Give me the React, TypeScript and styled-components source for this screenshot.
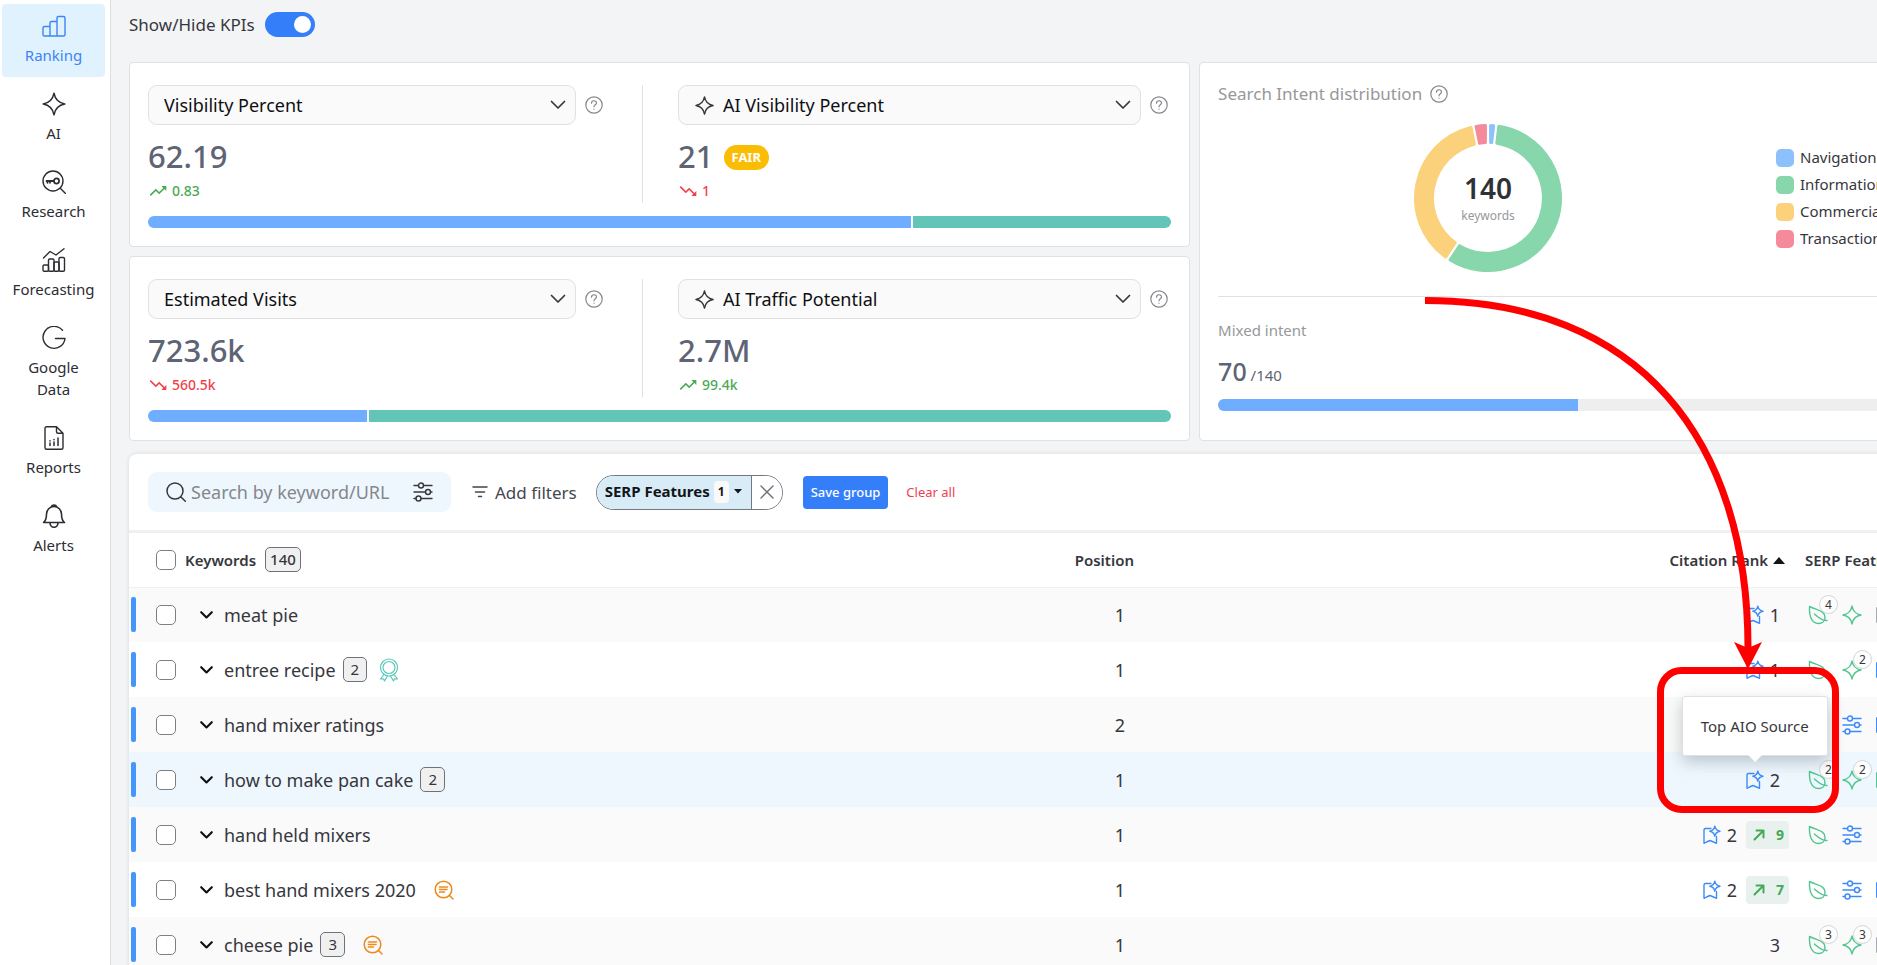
import React from "react";
import styled, { createGlobalStyle, css } from "styled-components";

const GlobalStyle = createGlobalStyle`
  *, *::before, *::after { box-sizing: border-box; }
  body {
    margin: 0;
    background: #f3f4f6;
    color: #36373d;
    font-family: "Noto Sans", "Open Sans", sans-serif;
    font-size: 18px;
  }
  button, input, select { font: inherit; color: inherit; }
`;

/* ---------- layout ---------- */

const Shell = styled.div`
  display: flex;
  height: 100vh;
  overflow: hidden;
`;

const Sidebar = styled.nav`
  flex: none;
  width: 111px;
  padding: 4px 5px 0 2px;
  display: flex;
  flex-direction: column;
  gap: 5px;
  background: #fff;
  border-right: 1px solid #dcdee0;
`;

const NavItem = styled.a<{ $active?: boolean }>`
  display: flex;
  flex-direction: column;
  align-items: center;
  padding: 10px 8px 11px;
  border-radius: 4px;
  font-size: 15px;
  line-height: 22px;
  text-align: center;
  text-decoration: none;
  color: ${(p) => (p.$active ? "#3d84f7" : "#2c2d33")};
  background: ${(p) => (p.$active ? "#e1f2ff" : "transparent")};
  svg { margin-bottom: 6px; }
`;

const Main = styled.main`
  flex: 1;
  min-width: 0;
  overflow: hidden;
  padding-left: 18px;
`;

const Workspace = styled.div`
  position: relative;
  min-width: 1828px;
`;

const KpiToggle = styled.label`
  display: flex;
  align-items: center;
  gap: 10px;
  width: max-content;
  padding: 12px 0 25px;
  font-size: 17px;
  line-height: 25px;
`;

const Switch = styled.input`
  appearance: none;
  margin: 0;
  width: 50px;
  height: 25px;
  padding: 4px;
  border-radius: 13px;
  background: #347efa;
  display: flex;
  justify-content: flex-start;
  &:checked { justify-content: flex-end; }
  &::before {
    content: "";
    width: 17px;
    height: 17px;
    border-radius: 50%;
    background: #fff;
  }
`;

const Dashboard = styled.section`
  display: grid;
  grid-template-columns: 7fr 5fr;
  gap: 9px;
`;

const KpiColumn = styled.div`
  display: flex;
  flex-direction: column;
  gap: 9px;
`;

const Panel = styled.article`
  background: #fff;
  border: 1px solid #dfe1e3;
  border-radius: 4px;
  padding: 22px 18px 18px;
`;

/* ---------- KPI panels ---------- */

const KpiPair = styled.div`
  display: grid;
  grid-template-columns: 15fr 16fr;
`;

const Kpi = styled.div<{ $second?: boolean }>`
  height: 118px;
  ${(p) =>
    p.$second
      ? css`padding: 0 3px 0 35px;`
      : css`padding-right: 39px; border-right: 1px solid #dfe1e3;`}
`;

const SelectRow = styled.div`
  display: flex;
  align-items: center;
  gap: 9px;
`;

const SelectBox = styled.div`
  flex: 1;
  display: grid;
  align-items: center;
  > * { grid-area: 1 / 1; }
  > svg { pointer-events: none; }
  > svg:first-of-type { justify-self: end; margin-right: 10px; }
  > svg + svg { margin-left: 17px; }
`;

const MetricSelect = styled.select<{ $icon?: boolean }>`
  appearance: none;
  width: 100%;
  height: 40px;
  padding: 0 36px 0 ${(p) => (p.$icon ? 44 : 15)}px;
  border: 1px solid #dfe1e3;
  border-radius: 9px;
  background: #fafafa;
  color: #0e0f12;
  font-size: 18px;
`;

const HelpButton = styled.button`
  display: flex;
  padding: 0;
  border: 0;
  background: none;
  color: #86888c;
`;

const Value = styled.div`
  display: flex;
  align-items: center;
  gap: 10px;
  margin-top: 11px;
  font-size: 31px;
  line-height: 41px;
  font-weight: 500;
  color: #5e6475;
`;

const Grade = styled.span`
  margin-top: 2px;
  padding: 0 8px;
  border-radius: 13px;
  background: #fbbc04;
  color: #fff;
  font-size: 13px;
  line-height: 25px;
  font-weight: 700;
`;

const Delta = styled.div<{ $down?: boolean }>`
  display: flex;
  align-items: center;
  gap: 4px;
  margin-top: 4px;
  font-size: 14px;
  line-height: 20px;
  font-weight: 500;
  color: ${(p) => (p.$down ? "#ef424c" : "#4aab54")};
`;

const Bar = styled.div<{ $track?: boolean }>`
  display: flex;
  gap: 2px;
  height: 12px;
  margin-top: ${(p) => (p.$track ? 6 : 13)}px;
  border-radius: 6px;
  overflow: hidden;
  background: ${(p) => (p.$track ? "#eeeeee" : "transparent")};
`;

const Segment = styled.span<{ $color: string }>`
  background: ${(p) => p.$color};
`;

/* ---------- intent panel ---------- */

const IntentTitle = styled.h2`
  display: flex;
  align-items: center;
  gap: 8px;
  margin: 0;
  font-size: 17px;
  line-height: 18px;
  font-weight: 400;
  color: #96989a;
`;

const IntentBody = styled.div`
  display: flex;
  align-items: center;
  padding: 20px 0 23px;
  border-bottom: 1px solid #dfe1e3;
`;

const DonutArea = styled.div`
  width: 75%;
  display: flex;
  justify-content: center;
`;

const Donut = styled.div`
  display: grid;
  place-items: center;
  > * { grid-area: 1 / 1; }
`;

const DonutLabel = styled.div`
  display: flex;
  flex-direction: column;
  align-items: center;
  padding-bottom: 2px;
  font-size: 12px;
  line-height: 18px;
  color: #96989a;
  strong {
    font-size: 28px;
    line-height: 38px;
    font-weight: 600;
    color: #303136;
  }
`;

const Legend = styled.ul`
  margin: 0;
  padding: 0 0 0 18px;
  list-style: none;
  font-size: 15px;
  line-height: 27px;
`;

const LegendItem = styled.li<{ $color: string }>`
  display: flex;
  align-items: center;
  gap: 6px;
  white-space: nowrap;
  &::before {
    content: "";
    width: 18px;
    height: 18px;
    border-radius: 5px;
    background: ${(p) => p.$color};
  }
`;

const MixedTitle = styled.h3`
  margin: 22px 0 0;
  font-size: 15px;
  line-height: 22px;
  font-weight: 400;
  color: #96989a;
`;

const MixedValue = styled.div`
  margin-top: 12px;
  font-size: 15px;
  line-height: 36px;
  color: #5e6475;
  strong { font-size: 25px; font-weight: 500; }
`;

/* ---------- keyword card ---------- */

const Card = styled.section`
  margin-top: 13px;
  background: #fff;
  border-radius: 8px 8px 0 0;
  box-shadow: 0 0 4px rgba(60, 80, 80, 0.16);
`;

const Toolbar = styled.div`
  display: flex;
  align-items: center;
  height: 79px;
  padding: 0 19px;
  border-bottom: 3px solid #eff0f0;
`;

const SearchBox = styled.label`
  display: flex;
  align-items: center;
  width: 303px;
  height: 40px;
  padding: 0 18px;
  border-radius: 9px;
  background: #eff7fe;
`;

const SearchInput = styled.input`
  flex: 1;
  min-width: 0;
  margin: 0 8px 0 5px;
  padding: 0;
  border: 0;
  background: none;
  outline: 0;
  &::placeholder { color: #85878c; opacity: 1; }
`;

const AddFilters = styled.button`
  display: flex;
  align-items: center;
  gap: 7px;
  margin-left: 21px;
  padding: 0;
  border: 0;
  background: none;
  color: #44464e;
  font-size: 17px;
`;

const FilterPill = styled.div`
  display: flex;
  height: 35px;
  margin-left: 19px;
  border: 1px solid #747780;
  border-radius: 18px;
  overflow: hidden;
`;

const PillMain = styled.button`
  display: flex;
  align-items: center;
  gap: 4px;
  padding: 0 8px 2px;
  border: 0;
  border-right: 1px solid #747780;
  background: #d7ecf6;
  color: #14151a;
  font-size: 15px;
  font-weight: 700;
  span {
    margin-top: 2px;
    padding: 0 4px;
    border-radius: 4px;
    background: #fafafa;
    font-size: 12px;
    line-height: 22px;
  }
`;

const PillClose = styled.button`
  display: flex;
  align-items: center;
  padding: 0 8px;
  border: 0;
  background: #fff;
  color: #6e7078;
`;

const SaveButton = styled.button`
  height: 33px;
  margin-left: 20px;
  padding: 0 8px;
  border: 0;
  border-radius: 4px;
  background: #347efa;
  color: #fff;
  font-size: 13px;
  font-weight: 500;
`;

const ClearLink = styled.a`
  margin-left: 18px;
  font-size: 13px;
  color: #ee3e50;
  text-decoration: none;
`;

const Table = styled.table`
  width: 100%;
  table-layout: fixed;
  border-collapse: collapse;
`;

const HeadCell = styled.th<{ $right?: boolean }>`
  height: 54px;
  padding: 0 9px 0 ${(p) => (p.$right ? 0 : 8)}px;
  border-bottom: 1px solid #eff0f0;
  font-size: 15px;
  font-weight: 600;
  text-align: ${(p) => (p.$right ? "right" : "left")};
  white-space: nowrap;
  svg { margin: 0 3px 2px 1px; }
`;

const HeadKeywords = styled.div`
  display: flex;
  align-items: center;
  gap: 9px;
  padding-left: 19px;
`;

const Row = styled.tr<{ $hover?: boolean }>`
  height: 55px;
  background: #fff;
  &:nth-child(odd) { background: #fafafa; }
  ${(p) => p.$hover && css`&& { background: #eff7fe; }`}
`;

const Cell = styled.td<{ $right?: boolean }>`
  padding: 0 ${(p) => (p.$right ? 18 : 0)}px 0 0;
  text-align: ${(p) => (p.$right ? "right" : "left")};
`;

const Keyword = styled.div`
  display: flex;
  align-items: center;
  &::before {
    content: "";
    width: 5px;
    height: 35px;
    margin: 0 20px 0 2px;
    border-radius: 2px;
    background: #4596fb;
  }
`;

const Check = styled.input`
  appearance: none;
  flex: none;
  width: 20px;
  height: 20px;
  margin: 0;
  border: 1px solid #7d7f85;
  border-radius: 5px;
  background: #fff;
`;

const Expand = styled.button`
  display: flex;
  margin: 0 11px 0 24px;
  padding: 0;
  border: 0;
  background: none;
  color: #0e0f12;
`;

const Count = styled.span<{ $tight?: boolean }>`
  margin-left: ${(p) => (p.$tight ? 0 : 7)}px;
  padding: 0 ${(p) => (p.$tight ? 4 : 7)}px;
  border: 1px solid #70727b;
  border-radius: 5px;
  background: #f0f0f0;
  font-size: 15px;
  line-height: 23px;
  font-weight: ${(p) => (p.$tight ? 500 : 400)};
`;

const KeywordBadge = styled.span<{ $award: boolean }>`
  display: flex;
  margin-left: ${(p) => (p.$award ? 12 : 18)}px;
  color: ${(p) => (p.$award ? "#5bc8bd" : "#ee8a1d")};
`;

const Citation = styled.div`
  display: flex;
  align-items: center;
  justify-content: flex-end;
  gap: 6px;
  padding-right: 8px;
  line-height: 24px;
  > b { font-weight: 400; margin-right: 9px; }
  > b + span { margin-left: -6px; }
`;

const CitationIcon = styled.span`
  position: relative;
  display: flex;
  color: #3c8bfb;
`;

const Gain = styled.span`
  display: flex;
  align-items: center;
  justify-content: space-between;
  width: 43px;
  height: 28px;
  padding: 0 5px 0 7px;
  border-radius: 4px;
  background: #e8f1ee;
  color: #43ab55;
  font-size: 14px;
  font-weight: 700;
`;

const Tooltip = styled.div`
  position: absolute;
  z-index: 2;
  left: 50%;
  bottom: 34px;
  transform: translateX(-50%);
  padding: 0 18px;
  border: 1px solid #dfe1e3;
  border-radius: 3px;
  background: #fff;
  box-shadow: 0 6px 16px rgba(50, 70, 80, 0.28);
  color: #36373d;
  font-size: 15px;
  line-height: 58px;
  white-space: nowrap;
  &::after {
    content: "";
    position: absolute;
    top: 100%;
    left: 50%;
    margin-left: -7px;
    border: 7px solid transparent;
    border-top-color: #fff;
    border-bottom: 0;
  }
`;

const Features = styled.div`
  display: flex;
  gap: 14px;
  padding-left: 11px;
`;

const Feature = styled.span<{ $color: string }>`
  position: relative;
  display: flex;
  color: ${(p) => p.$color};
`;

const FeatureCount = styled.sup`
  position: absolute;
  top: -10px;
  left: 11px;
  width: 19px;
  height: 19px;
  border: 1px solid #d3d6d8;
  border-radius: 50%;
  background: #fdfdfd;
  color: #36373d;
  font-size: 12px;
  line-height: 17px;
  text-align: center;
`;

const Callout = styled.svg`
  position: absolute;
  z-index: 3;
  top: 290px;
  left: 1290px;
  pointer-events: none;
`;

/* ---------- icons ---------- */

type IconProps = { w?: number; h?: number; box?: string; sw?: number; children: React.ReactNode };

const Icon = ({ w = 24, h = w, box = `0 0 ${w} ${h}`, sw = 1.4, children }: IconProps) => (
  <svg width={w} height={h} viewBox={box} fill="none" stroke="currentColor" strokeWidth={sw}
    strokeLinecap="round" strokeLinejoin="round" aria-hidden="true">{children}</svg>
);

const sparkPath = "M12 1.2C13 6.800 17.200 11 22.800 12C17.200 13 13 17.200 12 22.800C11 17.200 6.800 13 1.200 12C6.800 11 11 6.800 12 1.200Z";

const RankingIcon = () => (
  <Icon><path d="M8 12.500H2.500A1.500 1.500 0 0 0 1 14V20.500A1.500 1.500 0 0 0 2.500 22H8M15 7.500H9.500A1.500 1.500 0 0 0 8 9V22H15M15 22V4a1.500 1.500 0 0 1 1.500-1.500h5A1.500 1.500 0 0 1 23 4V20.500a1.500 1.500 0 0 1-1.500 1.500Z" /></Icon>
);
const SparkIcon = ({ size = 24, sw = 1.5 }: { size?: number; sw?: number }) => (
  <Icon w={size} box="0 0 24 24" sw={sw}><path d={sparkPath} /></Icon>
);
const ResearchIcon = () => (
  <Icon>
    <circle cx="11" cy="11" r="10" /><path d="M18.500 18.500L23.500 23.500" />
    <circle cx="14.500" cy="11" r="2.600" strokeWidth="1.700" />
    <path d="M11.800 11H4.500M5.500 11V12.800M8 11V12.800" strokeWidth="1.800" />
  </Icon>
);
const ForecastIcon = () => (
  <Icon>
    <path d="M1.500 10L8 3.500L14 7L22 .8" />
    <rect x="1" y="17" width="5.500" height="6.300" rx="1.200" /><rect x="6.500" y="11" width="5.500" height="12.300" rx="1.200" />
    <rect x="12" y="14" width="5" height="9.300" rx="1.200" /><rect x="17" y="9.500" width="5.500" height="13.800" rx="1.200" />
  </Icon>
);
const GoogleIcon = () => (
  <Icon><path d="M20.500 4.300A11 11 0 1 0 23 12.500H13.500" /></Icon>
);
const ReportIcon = () => (
  <Icon>
    <path d="M14.500 .8H4.500A1.500 1.500 0 0 0 3 2.300V21.700A1.500 1.500 0 0 0 4.500 23.200H19.500A1.500 1.500 0 0 0 21 21.700V7.300ZM14.500 .8V5.800A1.500 1.500 0 0 0 16 7.300H21" />
    <path d="M8 19.500V17M12 19.500V16M16 19.500V12M12 13.800V13.500M8 15V14.800" strokeWidth="1.500" />
  </Icon>
);
const BellIcon = () => (
  <Icon sw={1.6}><path d="M9.500 2.500C10 .5 14 .5 14.500 2.500M1.500 18.500C4 16.500 4.500 14 4.500 10a7.500 7.500 0 0 1 15 0C19.500 14 20 16.500 22.500 18.500ZM8 18.800a4 4.500 0 0 0 8 0" /></Icon>
);
const HelpIcon = () => (
  <Icon w={18} sw={1.2}>
    <circle cx="9" cy="9" r="8.200" />
    <path d="M6.500 7.200C6.500 4 11.500 4 11.500 7C11.500 8.800 9 8.800 9 10.800M9 13V13.200" />
  </Icon>
);
const DownIcon = ({ w = 16, sw = 1.7 }: { w?: number; sw?: number }) => (
  <Icon w={w} h={12} box="0 0 16 12" sw={sw}><path d="M1.500 2.500L8 9L14.500 2.500" /></Icon>
);
const TrendIcon = ({ down }: { down?: boolean }) => (
  <svg width="20" height="20" viewBox="0 0 24 24" fill="currentColor" aria-hidden="true">
    <path d={down
      ? "M16 18l2.290-2.290-4.880-4.880-4 4L2 7.410 3.410 6l6 6 4-4 6.300 6.290L22 12v6z"
      : "M16 6l2.290 2.290-4.880 4.880-4-4L2 16.590 3.410 18l6-6 4 4 6.300-6.290L22 12V6z"} />
  </svg>
);
const SearchIcon = () => (
  <Icon w={20} sw={1.5}><circle cx="9" cy="9" r="8" /><path d="M15 15L19.300 19.300" /></Icon>
);
const SlidersIcon = () => (
  <Icon w={20} sw={1.4}>
    <path d="M1 3.500H5.500M10.500 3.500H19M1 10H12.500M17.500 10H19M1 16.500H3M8 16.500H19" />
    <circle cx="8" cy="3.500" r="2.500" /><circle cx="15" cy="10" r="2.500" /><circle cx="5.500" cy="16.500" r="2.500" />
  </Icon>
);
const FilterIcon = () => (
  <Icon w={16} h={12} sw={1.5}><path d="M1 1H15M3.500 6H12.500M6.500 10.500H9.500" /></Icon>
);
const CloseIcon = () => (
  <Icon w={14} sw={1.4}><path d="M1 1L13 13M13 1L1 13" /></Icon>
);
const Caret = ({ up }: { up?: boolean }) => (
  <svg width={up ? 12 : 10} height={up ? 8 : 10} viewBox={up ? "0 0 12 8" : "0 0 10 10"} fill="#14151a" aria-hidden="true">
    <path d={up ? "M0 8L6 1L12 8Z" : "M1 3H9L5 7.500Z"} />
  </svg>
);
const AwardIcon = () => (
  <Icon w={20} h={24} sw={1.2}>
    <circle cx="10" cy="9.500" r="8.500" /><circle cx="10" cy="9.500" r="6" />
    <path d="M5 16.500L1.500 21L4.500 20.800L5.500 23L8.500 18M15 16.500L18.500 21L15.500 20.800L14.500 23L11.500 18" />
  </Icon>
);
const ContentIcon = () => (
  <Icon w={20} sw={1.5}>
    <circle cx="9.500" cy="9.500" r="8.300" /><path d="M15.500 15.500L19 19M5.500 7H13.500M5.500 9.500H13M5.500 12H10.500" />
  </Icon>
);
const BookmarkIcon = () => (
  <Icon w={18} h={20} sw={1.4}>
    <path d="M8 3.500H2.500A1.500 1.500 0 0 0 1 5V18.300L3.500 17L7 15.500L10.500 17L13.500 18.300V11.500" />
    <path d="M11.800 1.200C12.300 4 14 5.700 17 6.200C14 6.700 12.300 8.400 11.800 11.200C11.300 8.400 9.600 6.700 6.800 6.200C9.600 5.700 11.300 4 11.800 1.200Z" />
  </Icon>
);
const GainIcon = () => (
  <Icon w={12} sw={2}><path d="M1.500 10.500L10 2M3.500 1.500H10.500V8.500" /></Icon>
);
const LeafIcon = () => (
  <Icon w={20} sw={1.4}>
    <path d="M1.500 1.500C1 11 3.500 18.500 10.500 18.500C14.500 18.500 17 16 17 12.500C17 5.500 9.500 5.500 1.500 1.500Z" />
    <path d="M6.500 9C10 12 13 16 19 15.500" />
  </Icon>
);
const PageIcon = () => (
  <Icon w={20} sw={1.3}><rect x="0.600" y="2.500" width="18" height="15" rx="1" /><path d="M5 7H15M5 11H12" /></Icon>
);

/* ---------- donut ---------- */

const intents = [
  { name: "Navigational", color: "#8cc1fb", degrees: 6.5 },
  { name: "Informational", color: "#87d6ac", degrees: 207 },
  { name: "Commercial", color: "#fbd17b", degrees: 135 },
  { name: "Transactional", color: "#f58b9a", degrees: 11.5 },
];

const wedge = (from: number, to: number) => {
  const outer = 72.5;
  const inner = 55.5;
  const inset = 2.6;
  const point = (r: number, a: number) => `${75 + r * Math.sin(a)} ${75 - r * Math.cos(a)}`;
  const a = (from * Math.PI) / 180;
  const b = (to * Math.PI) / 180;
  const large = b - a > Math.PI ? 1 : 0;
  return `M${point(outer, a + inset / outer)}A${outer} ${outer} 0 ${large} 1 ${point(outer, b - inset / outer)}`
    + `L${point(inner, b - inset / inner)}A${inner} ${inner} 0 ${large} 0 ${point(inner, a + inset / inner)}Z`;
};

const IntentDonut = () => {
  let angle = 0;
  return (
    <svg width="150" height="150" viewBox="0 0 150 150" strokeWidth="3" strokeLinejoin="round" aria-hidden="true">
      {intents.map((item) => {
        const start = angle;
        angle += item.degrees;
        return <path key={item.name} d={wedge(start, angle)} fill={item.color} stroke={item.color} />;
      })}
    </svg>
  );
};

/* ---------- data ---------- */

const BLUE = "#6eadff";
const TEAL = "#63c5b8";

type Metric = { label: string; value: string; delta: string; down?: boolean; grade?: string; share: number };

const kpis: [Metric, Metric][] = [
  [
    { label: "Visibility Percent", value: "62.19", delta: "0.83", share: 62.19 },
    { label: "AI Visibility Percent", value: "21", delta: "1", down: true, grade: "FAIR", share: 21 },
  ],
  [
    { label: "Estimated Visits", value: "723.6k", delta: "560.5k", down: true, share: 723.6 },
    { label: "AI Traffic Potential", value: "2.7M", delta: "99.4k", share: 2653 },
  ],
];

const navigation = [
  { label: "Ranking", icon: <RankingIcon />, active: true },
  { label: "AI", icon: <SparkIcon /> },
  { label: "Research", icon: <ResearchIcon /> },
  { label: "Forecasting", icon: <ForecastIcon /> },
  { label: "Google Data", icon: <GoogleIcon /> },
  { label: "Reports", icon: <ReportIcon /> },
  { label: "Alerts", icon: <BellIcon /> },
];

type Kind = "leaf" | "spark" | "sliders" | "page";
type FeatureData = { kind: Kind; count?: number; color?: string };
type KeywordData = {
  text: string; group?: number; badge?: "award" | "content"; position: number;
  rank: number; top?: boolean; gain?: number; tip?: string; features: FeatureData[];
};

const GREEN = "#4fc58f";
const LINK = "#3c8bfb";

const keywords: KeywordData[] = [
  { text: "meat pie", position: 1, rank: 1, top: true,
    features: [{ kind: "leaf", count: 4 }, { kind: "spark" }, { kind: "page", color: "#a9abb0" }] },
  { text: "entree recipe", group: 2, badge: "award", position: 1, rank: 1, top: true,
    features: [{ kind: "leaf" }, { kind: "spark", count: 2 }, { kind: "page", color: LINK }] },
  { text: "hand mixer ratings", position: 2, rank: 2, top: true,
    features: [{ kind: "leaf" }, { kind: "sliders", color: LINK }, { kind: "page", color: LINK }] },
  { text: "how to make pan cake", group: 2, position: 1, rank: 2, top: true, tip: "Top AIO Source",
    features: [{ kind: "leaf", count: 2 }, { kind: "spark", count: 2 }, { kind: "page" }] },
  { text: "hand held mixers", position: 1, rank: 2, top: true, gain: 9,
    features: [{ kind: "leaf" }, { kind: "sliders", color: LINK }] },
  { text: "best hand mixers 2020", badge: "content", position: 1, rank: 2, top: true, gain: 7,
    features: [{ kind: "leaf" }, { kind: "sliders", color: LINK }, { kind: "page", color: LINK }] },
  { text: "cheese pie", group: 3, badge: "content", position: 1, rank: 3,
    features: [{ kind: "leaf", count: 3 }, { kind: "spark", count: 3 }, { kind: "page", color: "#a9abb0" }] },
];

const featureIcons: Record<Kind, React.ReactNode> = {
  leaf: <LeafIcon />,
  spark: <SparkIcon size={20} sw={1.7} />,
  sliders: <SlidersIcon />,
  page: <PageIcon />,
};

/* ---------- components ---------- */

const MetricBlock = ({ metric, second }: { metric: Metric; second?: boolean }) => (
  <Kpi $second={second}>
    <SelectRow>
      <SelectBox>
        <MetricSelect $icon={second} aria-label={`Metric: ${metric.label}`} defaultValue={metric.label}>
          <option>{metric.label}</option>
        </MetricSelect>
        <DownIcon />
        {second && <SparkIcon size={19} sw={1.8} />}
      </SelectBox>
      <HelpButton type="button" aria-label={`About ${metric.label}`}><HelpIcon /></HelpButton>
    </SelectRow>
    <Value>{metric.value}{metric.grade && <Grade>{metric.grade}</Grade>}</Value>
    <Delta $down={metric.down}><TrendIcon down={metric.down} />{metric.delta}</Delta>
  </Kpi>
);

const KeywordRow = ({ item }: { item: KeywordData }) => (
  <Row $hover={Boolean(item.tip)}>
    <Cell>
      <Keyword>
        <Check type="checkbox" aria-label={`Select ${item.text}`} />
        <Expand type="button" aria-label={`Expand ${item.text}`}><DownIcon w={13} sw={2.6} /></Expand>
        {item.text}
        {item.group && <Count>{item.group}</Count>}
        {item.badge && (
          <KeywordBadge $award={item.badge === "award"}>
            {item.badge === "award" ? <AwardIcon /> : <ContentIcon />}
          </KeywordBadge>
        )}
      </Keyword>
    </Cell>
    <Cell $right>{item.position}</Cell>
    <Cell>
      <Citation>
        {item.top && (
          <CitationIcon>
            <BookmarkIcon />
            {item.tip && <Tooltip role="tooltip">{item.tip}</Tooltip>}
          </CitationIcon>
        )}
        <b>{item.rank}</b>
        {item.gain && <Gain><GainIcon />{item.gain}</Gain>}
      </Citation>
    </Cell>
    <Cell>
      <Features>
        {item.features.map((f, i) => (
          <Feature key={i} $color={f.color ?? GREEN}>
            {featureIcons[f.kind]}
            {f.count && <FeatureCount>{f.count}</FeatureCount>}
          </Feature>
        ))}
      </Features>
    </Cell>
  </Row>
);

export default function App() {
  return (
    <>
      <GlobalStyle />
      <Shell>
        <Sidebar aria-label="Main">
          {navigation.map((n) => (
            <NavItem key={n.label} href="#" $active={n.active}>{n.icon}{n.label}</NavItem>
          ))}
        </Sidebar>
        <Main>
          <Workspace>
            <KpiToggle>Show/Hide KPIs<Switch type="checkbox" role="switch" defaultChecked /></KpiToggle>
            <Dashboard>
              <KpiColumn>
                {kpis.map(([first, second]) => (
                  <Panel key={first.label}>
                    <KpiPair>
                      <MetricBlock metric={first} />
                      <MetricBlock metric={second} second />
                    </KpiPair>
                    <Bar>
                      <Segment $color={BLUE} style={{ flexGrow: first.share }} />
                      <Segment $color={TEAL} style={{ flexGrow: second.share }} />
                    </Bar>
                  </Panel>
                ))}
              </KpiColumn>
              <Panel>
                <IntentTitle>
                  Search Intent distribution
                  <HelpButton type="button" aria-label="About search intent"><HelpIcon /></HelpButton>
                </IntentTitle>
                <IntentBody>
                  <DonutArea>
                    <Donut>
                      <IntentDonut />
                      <DonutLabel><strong>140</strong>keywords</DonutLabel>
                    </Donut>
                  </DonutArea>
                  <Legend>
                    {intents.map((i) => <LegendItem key={i.name} $color={i.color}>{i.name}</LegendItem>)}
                  </Legend>
                </IntentBody>
                <MixedTitle>Mixed intent</MixedTitle>
                <MixedValue><strong>70</strong> /140</MixedValue>
                <Bar $track><Segment $color={BLUE} style={{ width: "50%" }} /></Bar>
              </Panel>
            </Dashboard>

            <Card>
              <Toolbar>
                <SearchBox>
                  <SearchIcon />
                  <SearchInput type="text" placeholder="Search by keyword/URL" aria-label="Search by keyword/URL" />
                  <SlidersIcon />
                </SearchBox>
                <AddFilters type="button"><FilterIcon />Add filters</AddFilters>
                <FilterPill>
                  <PillMain type="button">SERP Features<span>1</span><Caret /></PillMain>
                  <PillClose type="button" aria-label="Remove filter"><CloseIcon /></PillClose>
                </FilterPill>
                <SaveButton type="button">Save group</SaveButton>
                <ClearLink href="#">Clear all</ClearLink>
              </Toolbar>
              <Table>
                <colgroup>
                  <col />
                  <col style={{ width: 200 }} />
                  <col style={{ width: 654 }} />
                  <col style={{ width: 160 }} />
                </colgroup>
                <thead>
                  <tr>
                    <HeadCell>
                      <HeadKeywords>
                        <Check type="checkbox" aria-label="Select all keywords" />
                        Keywords<Count $tight>140</Count>
                      </HeadKeywords>
                    </HeadCell>
                    <HeadCell $right>Position</HeadCell>
                    <HeadCell $right>Citation Rank <Caret up /></HeadCell>
                    <HeadCell>SERP Features</HeadCell>
                  </tr>
                </thead>
                <tbody>
                  {keywords.map((k) => <KeywordRow key={k.text} item={k} />)}
                </tbody>
              </Table>
            </Card>

            <Callout width="430" height="530" viewBox="0 0 430 530" fill="none" aria-hidden="true">
              <path d="M6 10.500C221 10.500 329 150 329 358" stroke="#fe0000" strokeWidth="7" />
              <path d="M315 352L329 358L343 352L329 379Z" fill="#fe0000" />
              <rect x="241.500" y="380.500" width="175" height="139" rx="21" stroke="#fe0000" strokeWidth="7" />
            </Callout>
          </Workspace>
        </Main>
      </Shell>
    </>
  );
}
